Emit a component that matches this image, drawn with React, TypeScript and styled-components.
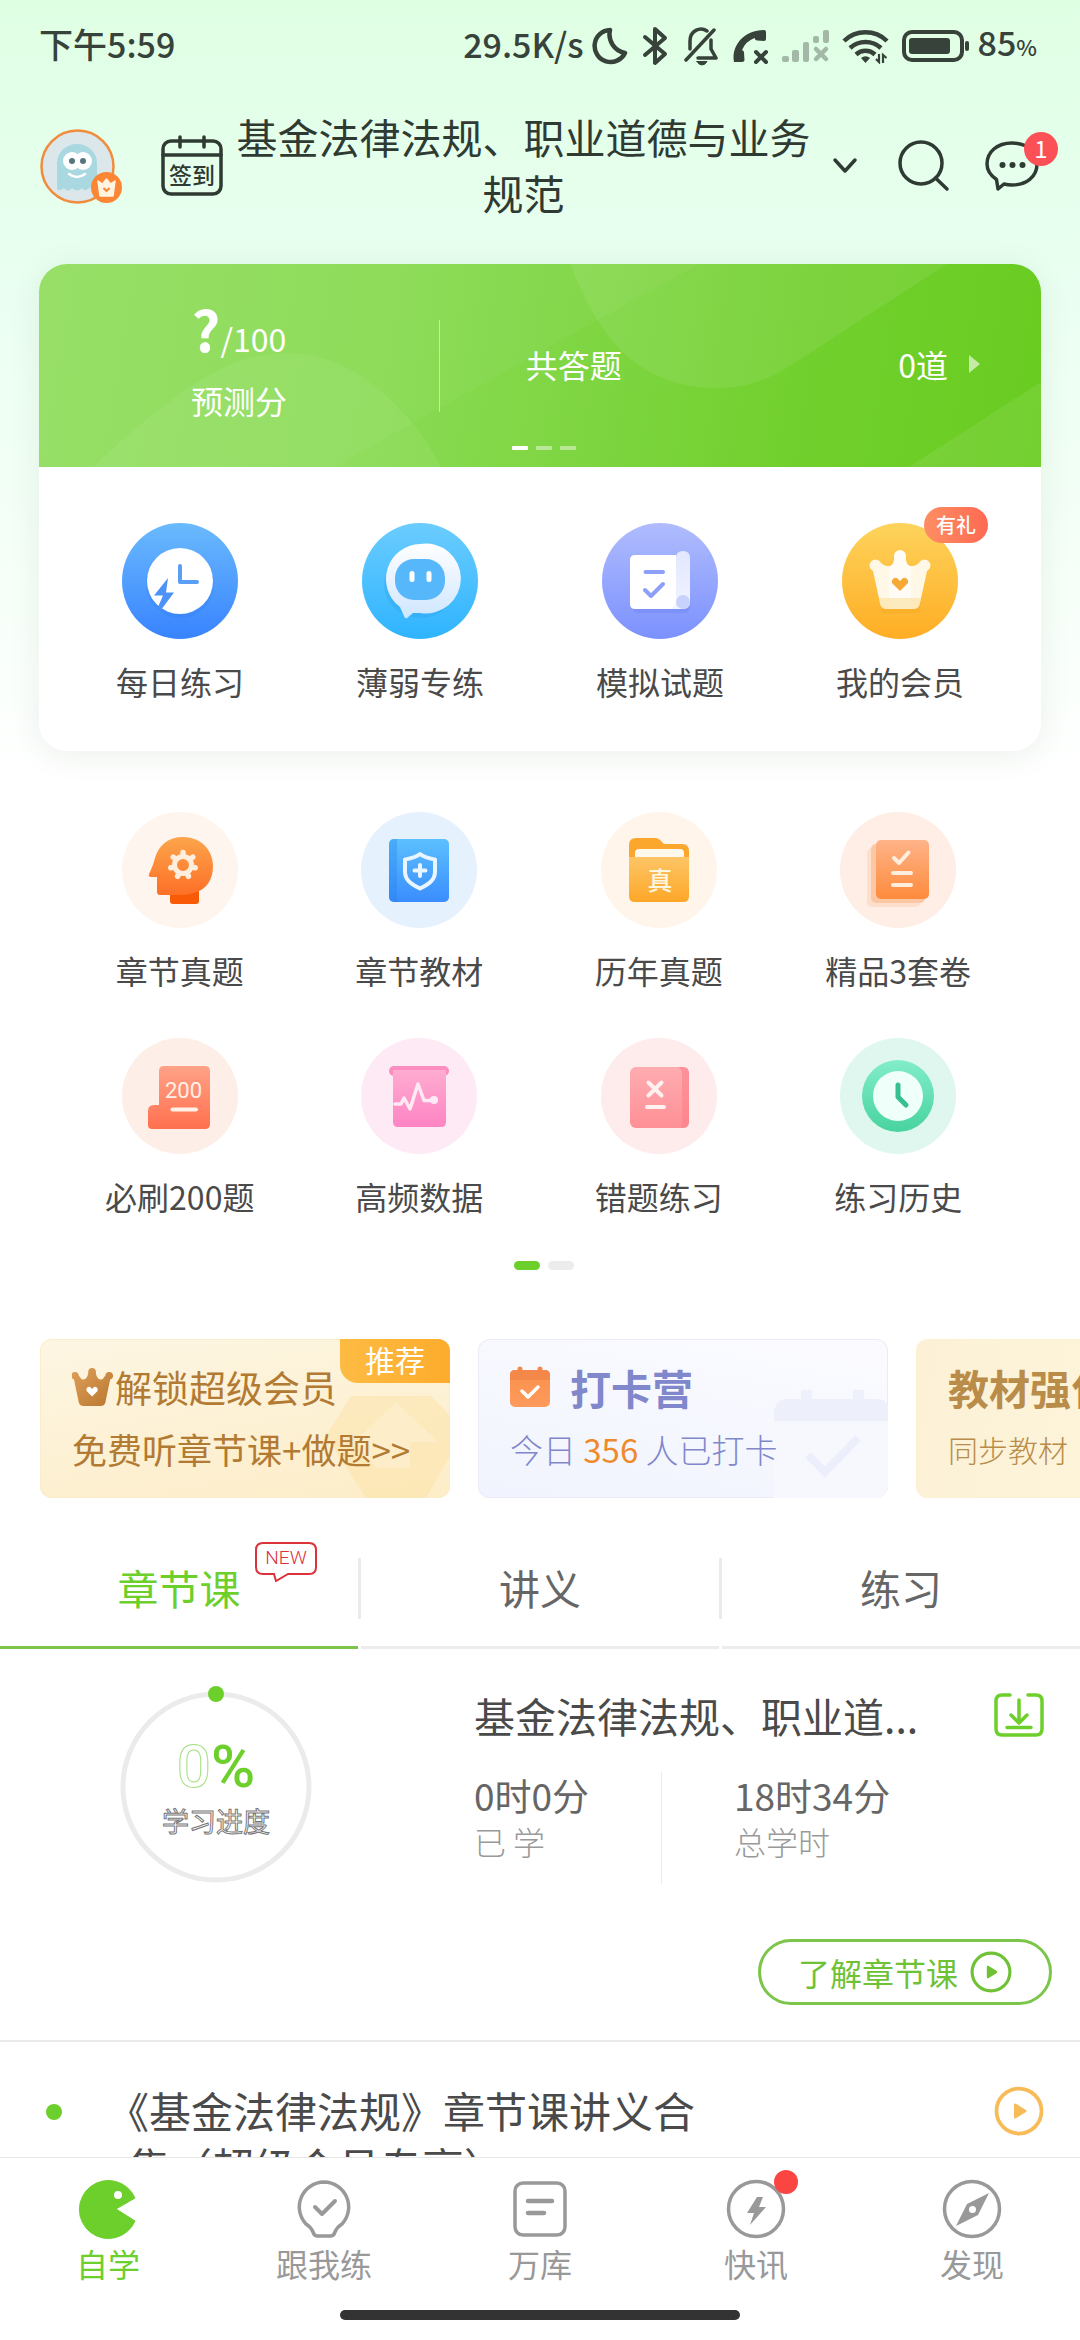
import React from "react";
import styled, { createGlobalStyle } from "styled-components";

const GREEN = "#6dcf2b";
const FONT = `"Noto Sans CJK SC", "Noto Sans", sans-serif`;

const GlobalStyle = createGlobalStyle`
  * { box-sizing: border-box; }
  body { margin: 0; background: #fff; font-family: ${FONT}; color: #4a4a4a; }
  button { margin: 0; padding: 0; border: 0; background: none; font: inherit; color: inherit; cursor: pointer; }
  a { color: inherit; text-decoration: none; }
  h1, h2, p { margin: 0; font-weight: 400; }
  svg { display: block; flex: none; }
`;

/* ---------- page frame ---------- */

const Screen = styled.div`
  display: flex;
  flex-direction: column;
  height: 100vh;
  overflow: hidden;
`;

const Content = styled.main`
  flex: 1;
  min-height: 0;
  overflow-x: hidden;
  overflow-y: auto;
  scrollbar-width: none;
  background: linear-gradient(180deg, #dfffe3 0, #e8fff0 250px, #f3fff6 500px, #fff 790px);
`;

/* ---------- status bar ---------- */

const StatusBar = styled.div`
  display: flex;
  align-items: center;
  justify-content: space-between;
  height: 92px;
  padding: 0 43px 4px 39px;
  font-size: 34px;
  font-weight: 500;
  line-height: 40px;
  color: #36423a;
`;

const StatusRight = styled.div`
  display: flex;
  align-items: center;
  gap: 8px;
`;

const StatusIcons = styled.div`
  display: flex;
  align-items: center;
  gap: 12px;
  padding-top: 4px;
`;

const Percent = styled.small`
  font-size: 22px;
`;

/* ---------- header ---------- */

const Header = styled.header`
  display: flex;
  align-items: center;
  padding: 16px 40px 40px;
  color: #2f3a33;
`;

const Avatar = styled.button`
  position: relative;
  margin-right: 46px;
`;

const AvatarBadge = styled.span`
  position: absolute;
  right: -7px;
  bottom: 1px;
`;

const TitleButton = styled.button`
  display: flex;
  flex: 1;
  align-items: center;
  gap: 16px;
  margin: 0 38px 0 8px;
`;

const Title = styled.h1`
  flex: 1;
  font-size: 41px;
  line-height: 56px;
  text-align: center;
  padding-bottom: 4px;
`;

const ChatButton = styled.button`
  position: relative;
  margin-left: 32px;
`;

const ChatCount = styled.span`
  position: absolute;
  top: -6px;
  right: -18px;
  width: 34px;
  height: 34px;
  border-radius: 50%;
  background: #fc5057;
  color: #fff;
  font-size: 24px;
  line-height: 32px;
  text-align: center;
`;

/* ---------- score card ---------- */

const Card = styled.section`
  margin: 0 39px;
  border-radius: 28px;
  background: #fff;
  box-shadow: 0 4px 32px rgba(40, 60, 40, 0.08);
`;

const Banner = styled.div`
  position: relative;
  display: flex;
  align-items: center;
  height: 203px;
  border-radius: 28px 28px 0 0;
  overflow: hidden;
  background: linear-gradient(100deg, #93de61 0%, #8adb54 35%, #72d02e 75%, #69cc20 100%);
  color: #fff;
  font-size: 32px;
  line-height: 44px;
`;

const BannerArt = styled.svg`
  position: absolute;
  inset: 0;
  width: 100%;
  height: 100%;
`;

const Score = styled.div`
  position: relative;
  display: flex;
  flex-direction: column;
  align-items: center;
  gap: 18px;
  width: 40%;
  height: 92px;
  padding-bottom: 14px;
  justify-content: center;
  border-right: 1px solid rgba(255, 255, 255, 0.5);
`;

const ScoreMark = styled.strong`
  font-size: 56px;
  line-height: 64px;
  font-weight: 700;
`;

const Answered = styled.a`
  position: relative;
  display: flex;
  flex: 1;
  align-items: center;
  justify-content: space-between;
  padding: 0 60px 4px 86px;
`;

const AnsweredCount = styled.span`
  display: flex;
  align-items: center;
  gap: 20px;
`;

const Dots = styled.div`
  position: absolute;
  left: 0;
  right: 0;
  bottom: 17px;
  display: flex;
  justify-content: center;
  gap: 8px;
  padding-left: 8px;
`;

const Dash = styled.i<{ $on?: boolean }>`
  width: 16px;
  height: 4px;
  border-radius: 1px;
  background: ${(p) => (p.$on ? "#fff" : "rgba(255,255,255,.45)")};
`;

/* ---------- feature grids ---------- */

const FeatureGrid = styled.nav<{ $inCard?: boolean }>`
  display: grid;
  grid-template-columns: repeat(4, 1fr);
  row-gap: 46px;
  padding: ${(p) => (p.$inCard ? "56px 21px 48px" : "61px 62px 0 60px")};
`;

const Feature = styled.a`
  position: relative;
  display: flex;
  flex-direction: column;
  align-items: center;
  gap: 20px;
  font-size: 32px;
  line-height: 44px;
  white-space: nowrap;
`;

const GiftTag = styled.span`
  position: absolute;
  top: -16px;
  left: calc(50% + 24px);
  padding: 0 12px;
  border-radius: 18px;
  background: linear-gradient(90deg, #fd8e63, #fd6a52);
  color: #fff;
  font-size: 20px;
  font-weight: 500;
  line-height: 36px;
`;

const Pager = styled.div`
  display: flex;
  justify-content: center;
  gap: 8px;
  padding: 43px 0 69px 8px;
`;

const PagerDot = styled.i<{ $on?: boolean }>`
  width: 26px;
  height: 9px;
  border-radius: 5px;
  background: ${(p) => (p.$on ? GREEN : "#ececec")};
`;

/* ---------- promo strip ---------- */

const PromoStrip = styled.section`
  display: flex;
  gap: 28px;
  padding-left: 40px;
  overflow: hidden;
`;

const Promo = styled.a<{ $bg: string; $line: string; $ink: string }>`
  position: relative;
  display: flex;
  flex: none;
  flex-direction: column;
  justify-content: center;
  gap: 12px;
  width: 410px;
  height: 159px;
  padding: 0 32px 4px;
  border-radius: 12px;
  overflow: hidden;
  white-space: nowrap;
  background: ${(p) => p.$bg};
  box-shadow: inset 0 0 0 1px ${(p) => p.$line};
  color: ${(p) => p.$ink};
`;

const PromoArt = styled.svg`
  position: absolute;
  right: 0;
  bottom: 0;
`;

const PromoTitle = styled.span<{ $size: number; $gap?: number; $bold?: boolean }>`
  position: relative;
  display: flex;
  align-items: center;
  gap: ${(p) => p.$gap ?? 0}px;
  font-size: ${(p) => p.$size}px;
  font-weight: ${(p) => (p.$bold ? 700 : 400)};
  line-height: 52px;
`;

const PromoText = styled.span<{ $size: number; $light?: boolean }>`
  position: relative;
  font-size: ${(p) => p.$size}px;
  font-weight: ${(p) => (p.$light ? 300 : 400)};
  line-height: 48px;
`;

const Hot = styled.b`
  color: #ef8a2c;
  font-weight: 400;
`;

const Recommend = styled.span`
  position: absolute;
  top: 0;
  right: 0;
  width: 110px;
  height: 44px;
  border-bottom-left-radius: 18px;
  background: linear-gradient(90deg, #fdbb43, #fdac2c);
  color: #fff;
  font-size: 30px;
  line-height: 40px;
  text-align: center;
`;

/* ---------- tabs ---------- */

const Tabs = styled.div`
  display: flex;
  margin-top: 34px;
`;

const Tab = styled.button<{ $on?: boolean }>`
  position: relative;
  flex: 1;
  height: 117px;
  padding-bottom: 4px;
  border-bottom: 3px solid ${(p) => (p.$on ? "#7cc54a" : "#ececec")};
  color: ${(p) => (p.$on ? GREEN : "#666")};
  font-size: 41px;
  line-height: 56px;
`;

const TabDivider = styled.span`
  width: 3px;
  margin: 26px 0 30px;
  background: #ebebeb;
`;

const NewTag = styled.span`
  position: absolute;
  top: 10px;
  left: calc(50% + 76px);
  width: 62px;
  height: 40px;
  color: #dc323b;
  font-family: Roboto, sans-serif;
  font-size: 19px;
  font-weight: 300;
  line-height: 32px;
  text-align: center;

  svg { position: absolute; inset: 0; }
`;

/* ---------- course progress ---------- */

const Course = styled.section`
  display: flex;
  border-bottom: 2px solid #ebebeb;
  padding-bottom: 35px;
`;

const RingColumn = styled.div`
  display: flex;
  justify-content: center;
  width: 40%;
  padding-top: 32px;
`;

const Ring = styled.div`
  display: grid;
  place-items: center;
  align-self: flex-start;

  > * { grid-area: 1 / 1; }
`;

const RingText = styled.div`
  display: flex;
  flex-direction: column;
  align-items: center;
  gap: 4px;
`;

const RingValue = styled.span`
  font-family: Roboto, sans-serif;
  font-size: 60px;
  font-weight: 500;
  line-height: 64px;
  color: ${GREEN};
`;

const Outlined = styled.span<{ $line: string }>`
  color: #fff;
  -webkit-text-stroke: 1px ${(p) => p.$line};
`;

const RingLabel = styled(Outlined)`
  font-size: 27px;
  line-height: 36px;
`;

const CourseInfo = styled.div`
  display: flex;
  flex: 1;
  flex-direction: column;
  padding: 40px 28px 0 42px;
`;

const CourseHead = styled.div`
  display: flex;
  align-items: center;
  justify-content: space-between;
  padding-right: 8px;
`;

const CourseTitle = styled.h2`
  font-size: 41px;
  line-height: 52px;
  white-space: nowrap;
`;

const Stats = styled.div`
  display: flex;
  margin: 31px 0 55px;
`;

const Stat = styled.div`
  height: 112px;
  color: #666;
  font-size: 37px;
  line-height: 46px;

  & + & {
    padding-left: 72px;
  }

  &:first-child {
    width: 188px;
    border-right: 1px solid #ebebeb;
  }

  small {
    display: block;
    color: #999;
    font-size: 32px;
    font-weight: 300;
  }
`;

const LearnButton = styled.button`
  display: flex;
  align-items: center;
  align-self: flex-end;
  gap: 12px;
  height: 66px;
  padding: 0 37px;
  border: 3px solid #7cc54a;
  border-radius: 33px;
  color: #6fc236;
  font-size: 32px;
  line-height: 44px;
`;

/* ---------- lesson list ---------- */

const Lesson = styled.a`
  display: flex;
  align-items: flex-start;
  padding: 40px 36px 40px 46px;
`;

const Bullet = styled.i`
  width: 16px;
  height: 16px;
  margin: 22px 66px 0 0;
  border-radius: 50%;
  background: ${GREEN};
`;

const LessonTitle = styled.span`
  flex: 1;
  padding-right: 270px;
  font-size: 42px;
  line-height: 56px;
  text-spacing-trim: trim-start;
`;

const LessonPlay = styled.span`
  padding-top: 4px;
`;

/* ---------- bottom bar ---------- */

const BottomBar = styled.footer`
  display: flex;
  flex-direction: column;
  align-items: center;
  background: #fff;
  border-top: 1px solid #e6e6e6;
`;

const BottomTabs = styled.nav`
  display: flex;
  width: 100%;
  padding-top: 21px;
`;

const BottomTab = styled.a<{ $on?: boolean }>`
  position: relative;
  display: flex;
  flex: 1;
  flex-direction: column;
  align-items: center;
  gap: 4px;
  color: ${(p) => (p.$on ? GREEN : "#999")};
  font-size: 32px;
  line-height: 40px;
`;

const RedDot = styled.i`
  position: absolute;
  top: -9px;
  left: calc(50% + 18px);
  width: 24px;
  height: 24px;
  border-radius: 50%;
  background: #fb4543;
`;

const HomeBar = styled.span`
  width: 37%;
  height: 10px;
  margin: 27px 0 20px;
  border-radius: 5px;
  background: #333;
`;

/* ---------- drawings ---------- */

const Fade = ({ id, from, to }: { id: string; from: string; to: string }) => (
  <linearGradient id={id} x1="0" y1="0" x2="0" y2="1">
    <stop offset="0" stopColor={from} />
    <stop offset="1" stopColor={to} />
  </linearGradient>
);

const Disc = ({ fill, children }: { fill: string; children: React.ReactNode }) => (
  <svg width="116" height="116" viewBox="0 0 116 116" aria-hidden="true">
    <circle cx="58" cy="58" r="58" fill={fill} />
    {children}
  </svg>
);

const DailyIcon = () => (
  <Disc fill="url(#daily)">
    <defs><Fade id="daily" from="#6abafd" to="#3883ff" /></defs>
    <circle cx="58" cy="61" r="34" fill="#2f7af0" opacity=".25" />
    <circle cx="58" cy="58" r="33" fill="#fff" />
    <path d="M58 43V59H75" fill="none" stroke="#5a9ef6" strokeWidth="4" strokeLinecap="round" strokeLinejoin="round" />
    <path d="M46 55 32 72.500H41L36 84 39 87 52 69.500H44Z" fill="#4c93f8" />
  </Disc>
);

const WeakIcon = () => (
  <Disc fill="url(#weak)">
    <defs><Fade id="weak" from="#6bccfe" to="#2fb4ff" /><Fade id="weakBubble" from="#ffffff" to="#cfe6ff" /></defs>
    <ellipse cx="58" cy="62" rx="36" ry="33" fill="#1d93e0" opacity=".2" />
    <path d="M58 21A35 35 0 1 1 58 90C55 90 53 90 51 90L45 95Q43 96 42 93L38 84A35 35 0 0 1 58 21Z" fill="url(#weakBubble)" />
    <rect x="33" y="36" width="50" height="41" rx="19" fill="#56b8fa" />
    <rect x="47.500" y="48" width="5" height="11" rx="2.500" fill="#fff" />
    <rect x="64.500" y="48" width="5" height="11" rx="2.500" fill="#fff" />
  </Disc>
);

const MockIcon = () => (
  <Disc fill="url(#mock)">
    <defs><Fade id="mock" from="#b0bcfd" to="#7b91fe" /><Fade id="mockRoll" from="#e2e7ff" to="#f2f4ff" /></defs>
    <rect x="30" y="38" width="58" height="52" rx="6" fill="#5d74ea" opacity=".25" />
    <path d="M33 32H74V86H33Q28 86 28 81V37Q28 32 33 32Z" fill="#fff" />
    <path d="M74 35Q74 28 81 28Q88 28 88 35V79Q88 86 81 86H70L74 80Z" fill="url(#mockRoll)" />
    <circle cx="81" cy="79" r="7" fill="#c9d2fc" />
    <path d="M43.500 49H61M43 67 49 73 61 61" fill="none" stroke="#8d9ff8" strokeWidth="4" strokeLinecap="round" strokeLinejoin="round" />
  </Disc>
);

const MemberIcon = () => (
  <Disc fill="url(#member)">
    <defs><Fade id="member" from="#fdd35c" to="#ffad24" /></defs>
    <path d="M36 50H82L78 90H40Z" fill="#e8930c" opacity=".18" />
    <path d="M52 33A6 6 0 0 1 64 33C63 39 66 44 70 43C74 43 75 41 77 40A6 6 0 1 1 85 48L78 80Q77 86 71 86H45Q39 86 38 80L31 48A6 6 0 1 1 39 40C41 41 42 43 46 43C50 44 53 39 52 33Z" fill="#fff8e6" />
    <path d="M47 43Q53 43 52 33A6 6 0 0 1 58 28A6 6 0 0 1 64 33Q63 43 69 43V86H47Z" fill="#fff" opacity=".6" />
    <path d="M37 75H79L78 80Q77 86 71 86H45Q39 86 38 80Z" fill="#fcdf9d" opacity=".6" />
    <path d="M58 68 50 60A4 4 0 0 1 55 55L58 58 61 55A4 4 0 0 1 66 60Z" fill="#f7a936" />
  </Disc>
);

const HeadIcon = () => (
  <Disc fill="#fef5ee">
    <defs><Fade id="head" from="#fca54b" to="#fd6f27" /></defs>
    <path d="M48 76H77V89Q77 92 74 92H51Q48 92 48 89Z" fill="#f95a06" />
    <path d="M61 25C80 25 91 39 91 54C91 68 84 76 77 79C66 84 55 83 48 83H38Q35 83 35 80V65H29Q26 65 27 62C30 56 32 50 33 46C37 33 46 25 61 25Z" fill="url(#head)" />
    <g stroke="#ffeedd" fill="none">
      <circle cx="61" cy="53" r="8.500" strokeWidth="5" />
      {[0, 1, 2, 3, 4, 5, 6].map((i) => (
        <path key={i} d="M61 42.500V40.500" strokeWidth="5.500" strokeLinecap="round" transform={`rotate(${(i * 360) / 7} 61 53)`} />
      ))}
    </g>
  </Disc>
);

const TextbookIcon = () => (
  <Disc fill="#e6f1fe">
    <defs><Fade id="book" from="#5cc0fe" to="#3a8dfe" /></defs>
    <rect x="28" y="27" width="60" height="63" rx="5" fill="url(#book)" />
    <path d="M33 27H36V90H33Q28 90 28 85V32Q28 27 33 27Z" fill="#1f7ff0" opacity=".3" />
    <path d="M59 42C64 46 69 46.500 74 47.500V60C74 69 66 73 59 76.500C52 73 44 69 44 60V47.500C49 46.500 54 46 59 42Z" fill="none" stroke="#e9f5ff" strokeWidth="4" strokeLinejoin="round" />
    <path d="M59 53V64M53.500 58.500H64.500" stroke="#e9f5ff" strokeWidth="4" strokeLinecap="round" />
  </Disc>
);

const FolderIcon = () => (
  <Disc fill="#fff5ea">
    <defs><Fade id="folder" from="#fdc566" to="#fda728" /></defs>
    <path d="M28 50V33Q28 26 35 26H54Q57 26 59 28L63 32H81Q88 32 88 39V50Z" fill="#fba72e" />
    <path d="M34 46V41Q34 37 38 37H79Q83 37 83 41V46Z" fill="#fff8ec" />
    <path d="M28 45H88V84Q88 90 82 90H34Q28 90 28 84Z" fill="url(#folder)" />
    <text x="59" y="78" textAnchor="middle" fontFamily={FONT} fontSize="25" fontWeight="500" fill="#fff6e0">真</text>
  </Disc>
);

const PapersIcon = () => (
  <Disc fill="#feeee5">
    <defs><Fade id="papers" from="#feb388" to="#fd8b3c" /></defs>
    <rect x="27" y="36" width="54" height="59" rx="5" fill="#fddfcc" />
    <rect x="31" y="32" width="54" height="59" rx="5" fill="#fcc7a5" />
    <rect x="36" y="28" width="53" height="59" rx="5" fill="url(#papers)" />
    <path d="M54 46 59 51 68.500 40.500M53 61H71M53 73H71" fill="none" stroke="#ffeedd" strokeWidth="4" strokeLinecap="round" strokeLinejoin="round" />
  </Disc>
);

const TwoHundredIcon = () => (
  <Disc fill="#fdeee8">
    <defs><Fade id="twoH" from="#ffa287" to="#ff704e" /></defs>
    <path d="M42 28H83Q88 28 88 33V86Q88 91 83 91H30Q26 91 26 87V73Q26 67 32 67H37V33Q37 28 42 28Z" fill="url(#twoH)" />
    <text x="61.500" y="60" textAnchor="middle" fontFamily="Roboto, sans-serif" fontSize="22" fill="#fff0e8">200</text>
    <path d="M50.500 71.500H74" stroke="#fff0e8" strokeWidth="4" strokeLinecap="round" />
  </Disc>
);

const PulseIcon = () => (
  <Disc fill="#feeaf5">
    <defs><Fade id="pulse" from="#ffacd0" to="#fd84c3" /></defs>
    <rect x="28" y="28" width="60" height="10" rx="5" fill="#fb8dc0" />
    <path d="M32 32H85V84Q85 89 80 89H37Q32 89 32 84Z" fill="url(#pulse)" />
    <path d="M34 66H40L43 60 49 71 57 46 63 62.500H73" fill="none" stroke="#ffe9f4" strokeWidth="3.500" strokeLinecap="round" strokeLinejoin="round" />
    <circle cx="73" cy="62" r="4" fill="#ffe9f4" />
  </Disc>
);

const WrongIcon = () => (
  <Disc fill="#feebec">
    <defs><Fade id="wrong" from="#ffacb1" to="#fd9096" /></defs>
    <rect x="29" y="29" width="59" height="61" rx="6" fill="url(#wrong)" />
    <path d="M77 29H82Q88 29 88 35V84Q88 90 82 90H81V36Q81 31 77 29Z" fill="#fb8089" opacity=".6" />
    <path d="M47.500 44.500 60.500 57.500M60.500 44.500 47.500 57.500M46 69H63" fill="none" stroke="#fff1ef" strokeWidth="4" strokeLinecap="round" />
  </Disc>
);

const HistoryIcon = () => (
  <Disc fill="#e0f7ef">
    <defs><Fade id="history" from="#82edc9" to="#48d39f" /></defs>
    <circle cx="58" cy="58" r="36" fill="url(#history)" />
    <circle cx="58" cy="58" r="25" fill="#effffa" />
    <path d="M58 47V59L66 67" fill="none" stroke="#37be91" strokeWidth="5" strokeLinecap="round" strokeLinejoin="round" />
  </Disc>
);

const MoonIcon = () => (
  <svg width="36" height="38" viewBox="0 0 36 38" fill="none" stroke="currentColor" strokeWidth="4.500" strokeLinejoin="round">
    <path d="M18 3A16 16 0 1 0 33 26A19 19 0 0 1 18 3Z" />
  </svg>
);
const BluetoothIcon = () => (
  <svg width="30" height="40" viewBox="0 0 30 40" fill="none" stroke="currentColor" strokeWidth="4" strokeLinejoin="round" strokeLinecap="round">
    <path d="M5 11 25 28 15 37V3L25 12 5 29" />
  </svg>
);
const BellOffIcon = () => (
  <svg width="38" height="40" viewBox="0 0 38 40" fill="none" stroke="currentColor" strokeWidth="3.500" strokeLinejoin="round" strokeLinecap="round">
    <path d="M4 34 32 4M25 5C18 0 8 5 8 15V23M29 14V23L34 32H16" />
    <path d="M15 35.500H25Q23 39 20 39T15 35.500Z" fill="currentColor" strokeWidth="1" />
  </svg>
);
const PhoneXIcon = () => (
  <svg width="36" height="36" viewBox="0 0 36 36">
    <path d="M2 34C-1 20 10 2 32 2Q34 2 34 4V11Q34 13 32 13L25 12.500Q23 12 22.500 10Q14 13 10 22Q12 22.500 12 24.500L12.500 32Q12.500 34 10 34Z" fill="currentColor" />
    <path d="M24 24 34 34M34 24 24 34" stroke="currentColor" strokeWidth="4" strokeLinecap="round" />
  </svg>
);
const SignalIcon = () => (
  <svg width="50" height="34" viewBox="0 0 50 34" fill="#a3b8a7" stroke="#a3b8a7" strokeLinecap="round">
    <g stroke="none">
      <rect x="2" y="27" width="7" height="6" rx="2" />
      <rect x="12" y="21" width="7" height="12" rx="2" />
      <rect x="23" y="13" width="6" height="20" rx="2" />
      <rect x="33" y="7" width="6" height="7" rx="2" />
      <rect x="43" y="1" width="6" height="13" rx="2" />
    </g>
    <path d="M36 20 46 30M46 20 36 30" strokeWidth="4.500" />
  </svg>
);
const WifiIcon = () => (
  <svg width="48" height="36" viewBox="0 0 48 36" fill="none" stroke="currentColor" strokeWidth="4.500">
    <path d="M2 13A31 31 0 0 1 45 13M8 20A23 23 0 0 1 39 20M14 26.500A14 14 0 0 1 33 26.500" />
    <path d="M23.500 35 19 30A7 7 0 0 1 28 30Z" fill="currentColor" stroke="none" />
    <path d="M37 26V34L34 31M41 35V27L44.500 30" strokeWidth="2.200" />
  </svg>
);
const BatteryIcon = () => (
  <svg width="68" height="32" viewBox="0 0 68 32">
    <rect x="2" y="2" width="58" height="28" rx="8" fill="none" stroke="currentColor" strokeWidth="4" />
    <rect x="7" y="8" width="41" height="16" rx="3" fill="currentColor" />
    <rect x="63" y="11" width="4" height="10" rx="2" fill="currentColor" />
  </svg>
);

const GhostAvatar = () => (
  <svg width="75" height="75" viewBox="0 0 75 75">
    <circle cx="37.500" cy="37.500" r="36" fill="#dce7ec" stroke="#f08c3c" strokeWidth="2.500" />
    <path d="M17 60V34A20 19 0 0 1 57 34V60Q53 63 50 58Q46 64 42 59Q37 64 32 59Q28 64 24 59Q20 63 17 60Z" fill="#a9d8e0" />
    <circle cx="32" cy="32" r="9" fill="#fff" /><circle cx="43" cy="32" r="9" fill="#fff" />
    <circle cx="32" cy="32" r="3" fill="#57757d" /><circle cx="43" cy="32" r="3" fill="#57757d" />
    <path d="M29 45Q37 51 45 45" fill="none" stroke="#fff" strokeWidth="2.500" strokeLinecap="round" />
  </svg>
);
const CrownBadge = () => (
  <svg width="31" height="31" viewBox="0 0 31 31">
    <circle cx="15.500" cy="15.500" r="15.500" fill="#fb8734" />
    <path d="M7 9 11.500 12 15.500 7 19.500 12 24 9 22 24H9Z" fill="#fff3e2" stroke="#fff3e2" strokeWidth="1.500" strokeLinejoin="round" />
    <path d="M12.500 16 15.500 19 18.500 16" fill="none" stroke="#fb8734" strokeWidth="2" />
  </svg>
);
const CheckInIcon = () => (
  <svg width="62" height="62" viewBox="0 0 62 62">
    <rect x="2" y="6" width="58" height="53" rx="8" fill="none" stroke="currentColor" strokeWidth="3.500" />
    <path d="M2 20H60M19 2V12M43 2V12" stroke="currentColor" strokeWidth="3.500" strokeLinecap="round" />
    <text x="31" y="49" textAnchor="middle" fontFamily={FONT} fontSize="23" fontWeight="500" fill="currentColor">签到</text>
  </svg>
);
const ChevronIcon = () => (
  <svg width="26" height="20" viewBox="0 0 26 20" fill="none" stroke="currentColor" strokeWidth="3.500" strokeLinecap="round" strokeLinejoin="round">
    <path d="M3 4 13 15 23 4" />
  </svg>
);
const SearchIcon = () => (
  <svg width="56" height="56" viewBox="0 0 56 56" fill="none" stroke="currentColor" strokeWidth="3.500" strokeLinecap="round">
    <circle cx="25" cy="25" r="21" /><path d="M39.500 40 51 51" />
  </svg>
);
const ChatIcon = () => (
  <svg width="56" height="56" viewBox="0 0 56 56">
    <path d="M28 5C43 5 53 14 53 26C53 39 42 47 28 47C25 47 22 46.500 20 46L14 51 12.500 41.500C6 37 3 32 3 26C3 14 13 5 28 5Z" fill="none" stroke="currentColor" strokeWidth="3.500" strokeLinejoin="round" />
    <circle cx="18.500" cy="27" r="3" fill="currentColor" /><circle cx="28.500" cy="27" r="3" fill="currentColor" /><circle cx="38.500" cy="27" r="3" fill="currentColor" />
  </svg>
);

const CrownGlyph = () => (
  <svg width="43" height="40" viewBox="0 0 45 42">
    <defs>
      <linearGradient id="crown" x1="0" y1="0" x2="1" y2="1">
        <stop offset="0" stopColor="#dfa05a" /><stop offset="1" stopColor="#b8772f" />
      </linearGradient>
    </defs>
    <path d="M17 5A4 4 0 0 1 25 5C25 10 28 14 31 13C33 13 33 11 35 9A4 4 0 1 1 40 13L35 37Q34 41 30 41H12Q8 41 7 37L2 13A4 4 0 1 1 7 9C9 11 9 13 11 13C14 14 17 10 17 5Z" fill="url(#crown)" />
    <path d="M21 31 15.500 25.500A3 3 0 0 1 19 21L21 23 23 21A3 3 0 0 1 26.500 25.500Z" fill="#fff" />
  </svg>
);
const CalendarGlyph = () => (
  <svg width="40" height="42" viewBox="0 0 40 42">
    <defs><Fade id="cal" from="#fb914a" to="#fe9a5c" /></defs>
    <path d="M10 3V8M30 3V8" stroke="#f4894c" strokeWidth="5" strokeLinecap="round" />
    <rect y="4" width="40" height="37" rx="5" fill="url(#cal)" />
    <path d="M0 9Q0 4 5 4H35Q40 4 40 9V14H0Z" fill="#f4874a" />
    <path d="M12 25 18 31 28 21" fill="none" stroke="#fff" strokeWidth="3.500" strokeLinecap="round" strokeLinejoin="round" />
  </svg>
);
const DownloadIcon = () => (
  <svg width="50" height="46" viewBox="0 0 50 46" fill="none" stroke={GREEN} strokeWidth="3.500" strokeLinecap="round" strokeLinejoin="round">
    <path d="M16 3H8Q2 3 2 9V37Q2 43 8 43H42Q48 43 48 37V9Q48 3 42 3H34M25 8V30M17 23 25 31 33 23M13 35.500H37" />
  </svg>
);
const PlayIcon = ({ size, color }: { size: number; color: string }) => (
  <svg width={size} height={size} viewBox="0 0 40 40">
    <circle cx="20" cy="20" r="18" fill="none" stroke={color} strokeWidth="3" />
    <path d="M17 15 25 20 17 25Z" fill={color} stroke={color} strokeWidth="2" strokeLinejoin="round" />
  </svg>
);

const SelfStudyIcon = () => (
  <svg width="60" height="60" viewBox="0 0 60 60">
    <path d="M38 30 57 19A29 29 0 1 0 57 42Z" fill={GREEN} stroke={GREEN} strokeWidth="1" strokeLinejoin="round" />
    <circle cx="40" cy="16" r="4" fill="#fff" />
  </svg>
);
const lineArt = { width: 60, height: 60, viewBox: "0 0 60 60", fill: "none", stroke: "#999", strokeWidth: 3.5, strokeLinecap: "round" as const, strokeLinejoin: "round" as const };
const FollowIcon = () => (
  <svg {...lineArt}>
    <path d="M30 3A25 25 0 0 0 12 45Q17 48 19 53Q20 57 24 57H36Q40 57 41 53Q43 48 48 45A25 25 0 0 0 30 3Z" />
    <path d="M21 28 28 35 41 22" strokeWidth="4" />
  </svg>
);
const LibraryIcon = () => (
  <svg {...lineArt}>
    <rect x="5" y="4" width="50" height="52" rx="8" />
    <path d="M18 22H42M18 34H34" strokeWidth="4.500" />
  </svg>
);
const NewsIcon = () => (
  <svg {...lineArt}>
    <circle cx="30" cy="30" r="27.500" />
    <path d="M31 18H37L33 28H40L24 46 28 34H21Z" fill="#999" stroke="none" />
  </svg>
);
const DiscoverIcon = () => (
  <svg {...lineArt}>
    <circle cx="30" cy="30" r="27.500" />
    <path d="M47 14 36 36 14 47 25 25Z" fill="#999" stroke="none" />
    <circle cx="30.500" cy="30.500" r="3.500" fill="#fff" stroke="none" />
  </svg>
);

/* ---------- data ---------- */

const quick = [
  { label: "每日练习", icon: <DailyIcon /> },
  { label: "薄弱专练", icon: <WeakIcon /> },
  { label: "模拟试题", icon: <MockIcon /> },
  { label: "我的会员", icon: <MemberIcon />, tag: "有礼" },
];

const features = [
  { label: "章节真题", icon: <HeadIcon /> },
  { label: "章节教材", icon: <TextbookIcon /> },
  { label: "历年真题", icon: <FolderIcon /> },
  { label: "精品3套卷", icon: <PapersIcon /> },
  { label: "必刷200题", icon: <TwoHundredIcon /> },
  { label: "高频数据", icon: <PulseIcon /> },
  { label: "错题练习", icon: <WrongIcon /> },
  { label: "练习历史", icon: <HistoryIcon /> },
];

const bottomTabs = [
  { label: "自学", icon: <SelfStudyIcon />, on: true },
  { label: "跟我练", icon: <FollowIcon /> },
  { label: "万库", icon: <LibraryIcon /> },
  { label: "快讯", icon: <NewsIcon />, dot: true },
  { label: "发现", icon: <DiscoverIcon /> },
];

export default function App() {
  return (
    <Screen>
      <GlobalStyle />
      <Content>
        <StatusBar>
          <span>下午5:59</span>
          <StatusRight>
            <span>29.5K/s</span>
            <StatusIcons>
              <MoonIcon />
              <BluetoothIcon />
              <BellOffIcon />
              <PhoneXIcon />
              <SignalIcon />
              <WifiIcon />
              <BatteryIcon />
            </StatusIcons>
            <span>85<Percent>%</Percent></span>
          </StatusRight>
        </StatusBar>

        <Header>
          <Avatar aria-label="我的">
            <GhostAvatar />
            <AvatarBadge><CrownBadge /></AvatarBadge>
          </Avatar>
          <button aria-label="签到"><CheckInIcon /></button>
          <TitleButton>
            <Title>基金法律法规、职业道德与业务规范</Title>
            <ChevronIcon />
          </TitleButton>
          <button aria-label="搜索"><SearchIcon /></button>
          <ChatButton aria-label="消息">
            <ChatIcon />
            <ChatCount>1</ChatCount>
          </ChatButton>
        </Header>

        <Card>
          <Banner>
            <BannerArt viewBox="0 0 1002 203" preserveAspectRatio="none" fill="#fff">
              <path d="M54 203C110 150 160 112 200 97C250 80 300 90 340 126C370 150 390 180 402 203Z" opacity=".06" />
              <path d="M295 203 660 0H0V203Z" opacity=".04" />
              <path d="M531 0C555 60 590 124 677 124C720 124 740 108 760 96L908 0Z" opacity=".08" />
              <path d="M870 203 1002 118V203Z" opacity=".08" />
            </BannerArt>
            <Score>
              <span><ScoreMark>?</ScoreMark>/100</span>
              <span>预测分</span>
            </Score>
            <Answered href="#answers">
              <span>共答题</span>
              <AnsweredCount>
                0道
                <svg width="13" height="20" viewBox="0 0 13 20"><path d="M1 1 12 10 1 19Z" fill="#fff" opacity=".6" /></svg>
              </AnsweredCount>
            </Answered>
            <Dots><Dash $on /><Dash /><Dash /></Dots>
          </Banner>
          <FeatureGrid $inCard>
            {quick.map((f) => (
              <Feature key={f.label} href="#quick">
                {f.icon}
                {f.label}
                {f.tag && <GiftTag>{f.tag}</GiftTag>}
              </Feature>
            ))}
          </FeatureGrid>
        </Card>

        <FeatureGrid>
          {features.map((f) => (
            <Feature key={f.label} href="#feature">
              {f.icon}
              {f.label}
            </Feature>
          ))}
        </FeatureGrid>
        <Pager><PagerDot $on /><PagerDot /></Pager>

        <PromoStrip>
          <Promo href="#member" $bg="linear-gradient(170deg, #fdf6e3, #fdedc8)" $line="#fbeccb" $ink="#b27a32">
            <PromoArt width="124" height="102" viewBox="0 0 124 102">
              <path d="M25 0H105L124 20V60L100 102H40L0 40Z" fill="#fbdf9c" opacity=".4" />
              <path d="M70 6 112 46H28Z" fill="#fdf0cf" opacity=".7" />
              <path d="M28 46H84V72H50Z" fill="#fff6df" opacity=".4" />
            </PromoArt>
            <Recommend>推荐</Recommend>
            <PromoTitle $size={37}><CrownGlyph />解锁超级会员</PromoTitle>
            <PromoText $size={35}>免费听章节课+做题&gt;&gt;</PromoText>
          </Promo>
          <Promo href="#checkin" $bg="linear-gradient(190deg, #fbfbff, #f1f4fe)" $line="#ebebf8" $ink="#8087cb">
            <PromoArt width="114" height="110" viewBox="0 0 114 110">
              <path d="M27 14V2H38V14ZM79 14V2H90V14Z" fill="#eef0fb" />
              <path d="M12 11H104Q112 11 114 18V33H0V24Q2 11 12 11Z" fill="#edf0fb" />
              <path d="M0 33H114V110H0Z" fill="#f7f8fe" />
              <path d="M34 67 51 84 84 50" fill="none" stroke="#eceffb" strokeWidth="8" />
            </PromoArt>
            <PromoTitle $size={41} $gap={20} $bold><CalendarGlyph />打卡营</PromoTitle>
            <PromoText $size={33} $light>今日 <Hot>356</Hot> 人已打卡</PromoText>
          </Promo>
          <Promo href="#book" $bg="linear-gradient(100deg, #fcf1d6, #fdf7df)" $line="#fbf2d4" $ink="#b98c4a">
            <PromoTitle $size={41} $bold>教材强化</PromoTitle>
            <PromoText $size={30} $light>同步教材</PromoText>
          </Promo>
        </PromoStrip>

        <Tabs role="tablist">
          <Tab role="tab" aria-selected="true" $on>
            章节课
            <NewTag>
              <svg width="62" height="40" viewBox="0 0 62 40" fill="none" stroke="#dc323b" strokeWidth="2">
                <path d="M8 1H54Q61 1 61 8V25Q61 32 54 32H33L21 39 19 32H8Q1 32 1 25V8Q1 1 8 1Z" />
              </svg>
              NEW
            </NewTag>
          </Tab>
          <TabDivider />
          <Tab role="tab" aria-selected="false">讲义</Tab>
          <TabDivider />
          <Tab role="tab" aria-selected="false">练习</Tab>
        </Tabs>

        <Course>
          <RingColumn>
            <Ring>
              <svg width="212" height="212" viewBox="0 0 212 212">
                <circle cx="106" cy="106" r="93" fill="none" stroke="#ebebeb" strokeWidth="5" />
                <circle cx="106" cy="13" r="8" fill={GREEN} />
              </svg>
              <RingText>
                <RingValue><Outlined $line="#a5e083">0</Outlined>%</RingValue>
                <RingLabel $line="#777">学习进度</RingLabel>
              </RingText>
            </Ring>
          </RingColumn>
          <CourseInfo>
            <CourseHead>
              <CourseTitle>基金法律法规、职业道...</CourseTitle>
              <button aria-label="下载"><DownloadIcon /></button>
            </CourseHead>
            <Stats>
              <Stat>0时0分<small>已 学</small></Stat>
              <Stat>18时34分<small>总学时</small></Stat>
            </Stats>
            <LearnButton>
              了解章节课
              <PlayIcon size={42} color="#6fc236" />
            </LearnButton>
          </CourseInfo>
        </Course>

        <Lesson href="#lesson">
          <Bullet />
          <LessonTitle>《基金法律法规》章节课讲义合集（超级会员专享）</LessonTitle>
          <LessonPlay><PlayIcon size={50} color="#f7bb58" /></LessonPlay>
        </Lesson>
      </Content>

      <BottomBar>
        <BottomTabs>
          {bottomTabs.map((t) => (
            <BottomTab key={t.label} href="#tab" $on={t.on}>
              {t.icon}
              {t.label}
              {t.dot && <RedDot />}
            </BottomTab>
          ))}
        </BottomTabs>
        <HomeBar />
      </BottomBar>
    </Screen>
  );
}
